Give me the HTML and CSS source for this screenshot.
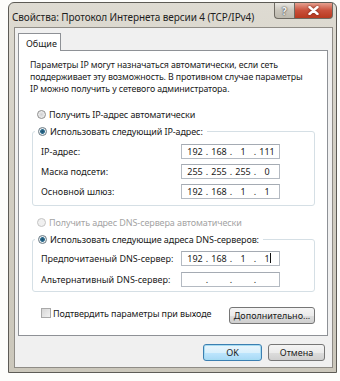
FILE: index.html
```html
<!DOCTYPE html>
<html lang="ru">
<head>
    <meta charset="UTF-8">
    <title>Свойства: Протокол Интернета версии 4 (TCP/IPv4)</title>
    <link rel="stylesheet" href="styles.css">
</head>
<body>

    <div class="window">
        <!-- Title bar -->
        <div class="titlebar">
            <span class="title">Свойства: Протокол Интернета версии 4 (TCP/IPv4)</span>
            <div class="caption-btns">
                <span class="cap-btn help">?</span>
                <span class="cap-btn close">
                    <svg width="11" height="9" viewBox="0 0 11 9">
                        <path d="M1.5 1 L9.5 8 M9.5 1 L1.5 8" stroke="#fff" stroke-width="2.4" stroke-linecap="round"/>
                    </svg>
                </span>
            </div>
        </div>

        <div class="client">
            <div class="tabs">
                <span class="tab">Общие</span>
            </div>

            <div class="panel">
                <p class="intro">
                    Параметры IP могут назначаться автоматически, если сеть<br>
                    поддерживает эту возможность. В противном случае параметры<br>
                    IP можно получить у сетевого администратора.
                </p>

                <div class="option first"><span class="radio"></span>Получить IP-адрес автоматически</div>

                <fieldset class="group">
                    <legend class="option"><span class="radio checked"></span>Использовать следующий IP-адрес:</legend>
                    <div class="row">
                        <span>IP-адрес:</span>
                        <div class="ip"><span>192</span><i>.</i><span>168</span><i>.</i><span>1</span><i>.</i><span>111</span></div>
                    </div>
                    <div class="row">
                        <span>Маска подсети:</span>
                        <div class="ip"><span>255</span><i>.</i><span>255</span><i>.</i><span>255</span><i>.</i><span>0</span></div>
                    </div>
                    <div class="row">
                        <span>Основной шлюз:</span>
                        <div class="ip"><span>192</span><i>.</i><span>168</span><i>.</i><span>1</span><i>.</i><span>1</span></div>
                    </div>
                </fieldset>

                <div class="option disabled"><span class="radio"></span>Получить адрес DNS-сервера автоматически</div>

                <fieldset class="group dns">
                    <legend class="option"><span class="radio checked"></span>Использовать следующие адреса DNS-серверов:</legend>
                    <div class="row">
                        <span>Предпочитаеный DNS-сервер:</span>
                        <div class="ip focus"><span>192</span><i>.</i><span>168</span><i>.</i><span>1</span><i>.</i><span class="caret">1</span></div>
                    </div>
                    <div class="row">
                        <span>Альтернативный DNS-сервер:</span>
                        <div class="ip"><span></span><i>.</i><span></span><i>.</i><span></span><i>.</i><span></span></div>
                    </div>
                </fieldset>

                <div class="panel-foot">
                    <div class="check"><span class="box"></span>Подтвердить параметры при выходе</div>
                    <button class="btn">Дополнительно...</button>
                </div>
            </div>

            <div class="dialog-btns">
                <button class="btn default">OK</button>
                <button class="btn">Отмена</button>
            </div>
        </div>
    </div>

</body>
</html>
```

FILE: styles.css
```css
body, html {
    margin: 0;
    width: 340px;
    height: 381px;
    background: #fdfdfb;
    font-family: "Noto Sans", "DejaVu Sans", sans-serif;
    font-size: 9px;
    color: #1a1a1a;
    overflow: hidden;
}

/* Window frame */
.window {
    box-sizing: border-box;
    margin: 2px 0 0 8px;
    width: 329px;
    height: 371px;
    border: 1px solid #5d5b55;
    border-radius: 6px 6px 0 0;
    background: linear-gradient(to bottom, #dedbd2, #d3cfc4 40%, #cbc7bb);
    display: flex;
    flex-direction: column;
}

.titlebar {
    height: 24px;
    display: flex;
    justify-content: space-between;
    align-items: flex-start;
}

.title {
    padding: 7px 0 0 3px;
    font-size: 10px;
    color: #1e1e1e;
    letter-spacing: -0.1px;
}

.caption-btns {
    display: flex;
    margin-right: 3px;
}

.cap-btn {
    box-sizing: border-box;
    height: 16px;
    display: flex;
    justify-content: center;
    align-items: center;
    border: 1px solid #6e6a62;
    border-top: none;
}

.help {
    width: 20px;
    border-radius: 0 0 0 4px;
    border-right: none;
    background: linear-gradient(to bottom, #e9e7e1, #c9c5bb 50%, #bdb9ae);
    color: #f7f7f7;
    font-weight: bold;
    font-size: 10px;
    text-shadow: 0 0 1px #333, 0 0 2px #555;
}

.close {
    width: 39px;
    border-radius: 0 0 4px 0;
    background: linear-gradient(to bottom, #e6a08f, #c9503b 50%, #b8391f);
}

.close svg {
    filter: drop-shadow(0 0 1px #6d1a0c);
}

/* Client area */
.client {
    flex: 1;
    margin: 0 3px 4px 5px;
    border: 1px solid #8f8c86;
    background: #f0f0f0;
    padding: 5px 4px 0 3px;
    display: flex;
    flex-direction: column;
}

.tabs {
    display: flex;
    height: 17px;
}

.tab {
    box-sizing: border-box;
    width: 43px;
    height: 18px;
    padding: 3px 0 0 7px;
    background: #fff;
    border: 1px solid #8e9196;
    border-bottom: none;
    position: relative;
    z-index: 1;
}

.panel {
    box-sizing: border-box;
    height: 286px;
    background: #fff;
    border: 1px solid #8e9196;
    padding: 8px 0 0 0;
    display: flex;
    flex-direction: column;
}

.intro {
    margin: 0 0 0 11px;
    font-size: 8.8px;
    line-height: 12px;
    letter-spacing: -0.1px;
}

.option {
    display: flex;
    align-items: center;
    height: 12px;
    letter-spacing: -0.1px;
}

.option.first {
    margin: 13px 0 0 18px;
}

.option.disabled {
    margin: 10px 0 0 18px;
    color: #a4a4a4;
}

.radio {
    box-sizing: border-box;
    width: 9px;
    height: 9px;
    margin-right: 3px;
    border-radius: 50%;
    border: 1px solid #8d8d8d;
    background: radial-gradient(circle, #cfd0d2 0, #eeeeee 70%);
}

.radio.checked {
    background: radial-gradient(circle, #1f4f6e 0, #2c6d8f 2px, #e9eef1 2.8px);
    border-color: #6a7a84;
}

.disabled .radio {
    border-color: #c4c4c4;
    background: #f0f0f0;
}

/* Group boxes */
.group {
    margin: 5px 12px 0 13px;
    padding: 6px 34px 6px 8px;
    border: 1px solid #d5dfe5;
    border-radius: 3px;
    display: flex;
    flex-direction: column;
    gap: 5px;
}

.group legend {
    margin-left: -6px;
    padding: 0 4px 0 3px;
    margin-bottom: 1px;
}

.group.dns {
    gap: 6px;
    padding-top: 5px;
    padding-bottom: 4px;
}

.row {
    display: flex;
    justify-content: space-between;
    align-items: center;
    height: 15px;
}

.ip {
    box-sizing: border-box;
    width: 99px;
    height: 15px;
    padding-left: 3px;
    border: 1px solid #b4bac2;
    border-top-color: #a5abb3;
    display: flex;
    align-items: center;
}

.ip span {
    width: 20px;
    text-align: center;
}

.ip i {
    font-style: normal;
    width: 4px;
    text-align: center;
}

.caret {
    position: relative;
}

.caret::after {
    content: "";
    position: absolute;
    top: 1px;
    left: 13px;
    width: 1px;
    height: 10px;
    background: #111;
}

/* Footer of panel */
.panel-foot {
    margin: 15px 12px 0 22px;
    display: flex;
    justify-content: space-between;
    align-items: flex-start;
}

.check {
    display: flex;
    align-items: center;
    height: 10px;
    padding-top: 1px;
    letter-spacing: -0.1px;
}

.box {
    box-sizing: border-box;
    width: 10px;
    height: 10px;
    margin-right: 2px;
    border: 1px solid #a9a9a9;
    background: linear-gradient(135deg, #d6d6d6, #f2f2f2);
}

.btn {
    box-sizing: border-box;
    height: 17px;
    padding: 0;
    font-family: inherit;
    font-size: 9px;
    color: #1a1a1a;
    border: 1px solid #767676;
    border-radius: 3px;
    background: linear-gradient(to bottom, #f4f4f4, #ebebeb 50%, #dddddd 51%, #cfcfcf);
}

.panel-foot .btn {
    width: 86px;
}

.dialog-btns {
    margin-top: 8px;
    display: flex;
    justify-content: flex-end;
    gap: 6px;
    padding-right: 3px;
}

.dialog-btns .btn {
    width: 57px;
}

.btn.default {
    width: 59px;
    border-color: #3c7fb1;
    box-shadow: inset 0 0 0 1px #a6dcf2;
    background: linear-gradient(to bottom, #eaf6fd, #d9f0fc 50%, #bee6fd 51%, #a7d9f5);
}
```
